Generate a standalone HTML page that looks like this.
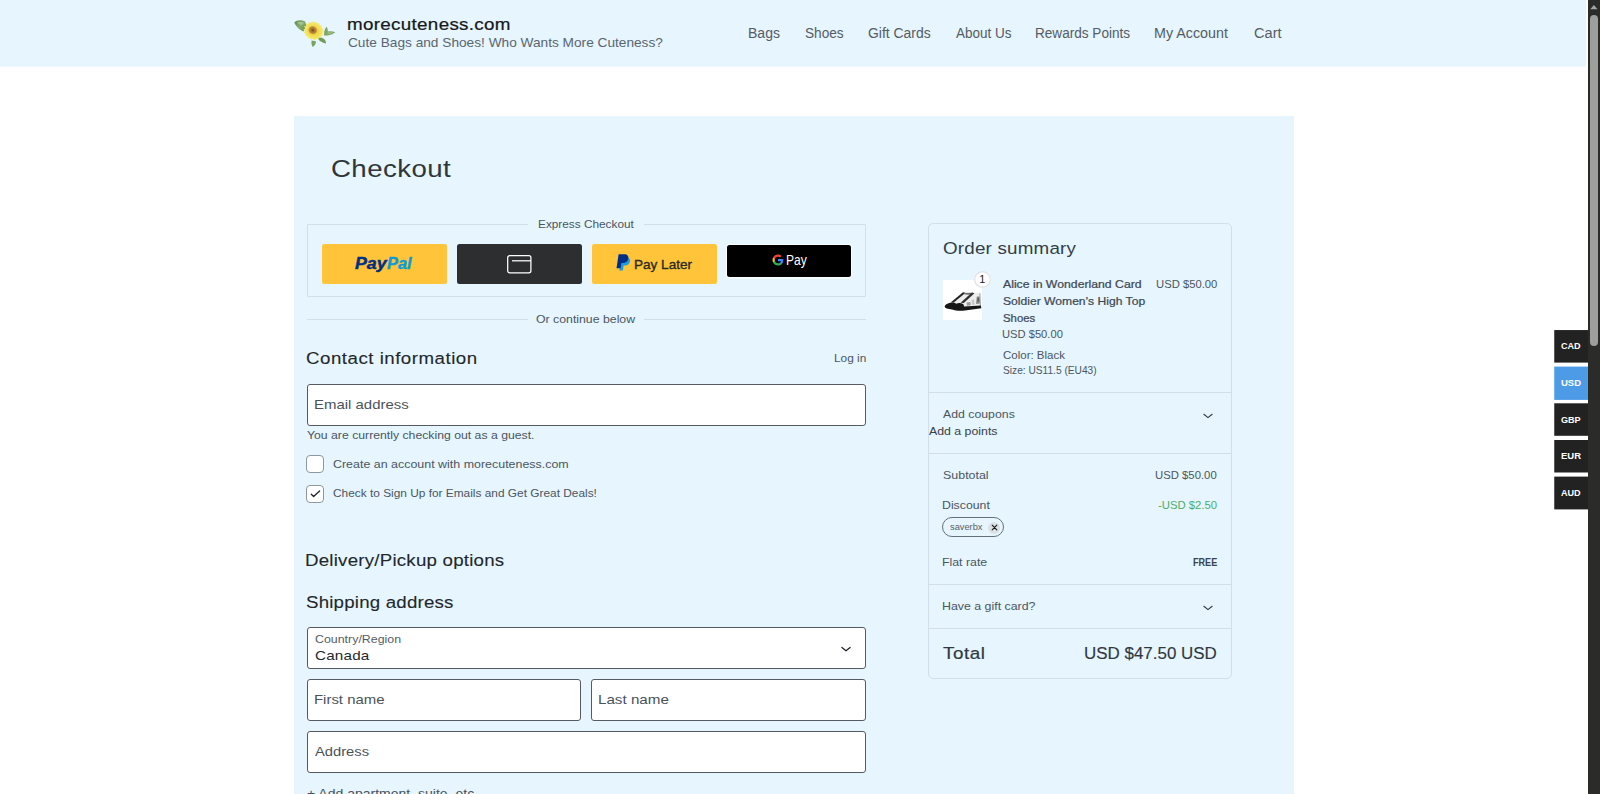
<!DOCTYPE html>
<html lang="en">
<head>
<meta charset="utf-8">
<title>Checkout – morecuteness.com</title>
<style>
*{box-sizing:border-box;margin:0;padding:0}
html,body{width:1600px;height:794px;overflow:hidden;background:#fff}
body{position:relative;font-family:"Liberation Sans",sans-serif;font-weight:400;color:#4b5661;font-size:11.2px}
.t{position:absolute;white-space:nowrap;line-height:1;transform-origin:0 0;font-weight:400;font-style:normal;text-decoration:none;display:block}
svg{position:absolute;overflow:visible}

#hdr{position:absolute;left:0;top:0;width:1586px;height:67px;background:linear-gradient(to bottom,#e6f5fe 0,#e6f5fe 66px,#f1f9fe 66px,#f1f9fe 67px)}
#main{position:absolute;left:294px;top:116px;width:1000px;height:678px;background:#e6f5fe;overflow:hidden}

.field{position:absolute;background:#fff;border:1px solid #555b61;border-radius:3px;height:42px}
.hr{position:absolute;height:1px;background:#d2dee8}
.cb{position:absolute;width:17.4px;height:17.4px;border:1px solid #8f989f;border-radius:4px;background:#fff}
#express{position:absolute;left:13px;top:108px;width:559px;height:73px;border:1px solid #d2dee8;border-radius:1px}
.pbtn{position:absolute;top:128px;width:125px;height:40px;border-radius:2.5px;display:block}
#summary{position:absolute;left:634.2px;top:107.2px;width:303.6px;height:455.6px;border:1px solid #d2dee8;border-radius:5px}
.sep{position:absolute;left:635px;width:302px;height:1px;background:#d2dee8}
#chip{position:absolute;left:648.3px;top:401px;width:61.4px;height:20px;border:1px solid #65707b;border-radius:10px}
#chip i{position:absolute;left:44.6px;top:3.5px;width:12px;height:12px;border-radius:6px;background:#dde1e5}
#qtyb{position:absolute;left:680.1px;top:155.3px;width:16.6px;height:16.6px;border-radius:8.3px;background:#fff;box-shadow:inset 0 0 0 1.4px #e1e5e8}
#thumb{position:absolute;left:648.6px;top:164.1px;width:39.6px;height:39.7px;background:#fff}

#sb{position:absolute;left:1588px;top:0;width:12px;height:794px;background:#2b2b2a}
#sb i{position:absolute;left:2.4px;top:15px;width:7.6px;height:331px;border-radius:4px;background:#9e9e9c}
</style>
</head>
<body>

<header id="hdr">
  <svg style="left:286px;top:10px" width="60" height="46" viewBox="0 0 60 46">
    <defs>
      <radialGradient id="gp" cx="50%" cy="50%" r="50%"><stop offset="0" stop-color="#e3bd34"/><stop offset=".5" stop-color="#f0d948"/><stop offset="1" stop-color="#f5e86e"/></radialGradient>
      <radialGradient id="gc" cx="50%" cy="50%" r="50%"><stop offset="0" stop-color="#6a4514"/><stop offset=".4" stop-color="#a5722a"/><stop offset="1" stop-color="#cfa043"/></radialGradient>
      <linearGradient id="gl" x1="0" y1="0" x2="1" y2="1"><stop offset="0" stop-color="#5f8a52"/><stop offset=".5" stop-color="#86ad6e"/><stop offset="1" stop-color="#5d8a4c"/></linearGradient>
    </defs>
    <path d="M8.3 12.6 C10.5 9.9 15.5 9.7 19.2 11.6 L20.6 16.5 L17.4 21.4 C13.2 20 9.8 16.4 8.3 12.6Z" fill="url(#gl)"/>
    <path d="M11 12.4 C13.4 11.2 16 11.6 18 12.8 L15.3 15.2 C13.6 14.6 12.2 13.6 11 12.4Z" fill="#b3cba0" opacity=".75"/>
    <path d="M38.2 21.5 C39 18.8 40 17.2 40.6 16.8 C41.6 18.4 42 20 41.8 21.6 C44.3 21 47 21.4 49.3 22.3 C47 24.3 44.3 25.3 41.6 25.4 L38 25.6Z" fill="#7fa867"/>
    <path d="M41.4 22.6 C43.6 22.2 45.6 22.2 47.4 22.5 C45.6 23.6 43.6 24.2 41.6 24.2Z" fill="#a8c594" opacity=".7"/>
    <path d="M32.4 27.2 C35.6 27 38.2 28.4 39.4 30.4 C39.9 31.6 40 32.8 40 33.6 C37 32.8 34.4 31.4 32.4 29.4Z" fill="#6f9c58"/>
    <path d="M25.6 30.6 C27.4 31 29.6 31.2 30 31.6 C30 33.8 28.6 36 26.6 37 C25.4 35 25.2 32.6 25.6 30.6Z" fill="#79a45f"/>
    <path d="M37.2 25.3 L34.5 25.5 L35.2 28.0 L32.6 27.3 L32.4 29.8 L30.0 28.3 L28.9 30.5 L27.2 28.5 L25.3 30.1 L24.4 27.7 L22.0 28.5 L22.0 26.0 L19.3 26.0 L20.3 23.8 L17.6 22.9 L19.4 21.2 L17.2 19.5 L19.5 18.5 L18.0 16.3 L20.7 16.1 L20.0 13.6 L22.6 14.3 L22.8 11.8 L25.2 13.3 L26.3 11.1 L28.0 13.1 L29.9 11.5 L30.8 13.9 L33.2 13.1 L33.2 15.6 L35.9 15.6 L34.9 17.8 L37.6 18.7 L35.8 20.4 L38.0 22.1 L35.7 23.1Z" fill="#f4e468"/>
    <ellipse cx="27.6" cy="20.8" rx="9.2" ry="8.3" transform="rotate(25 27.6 20.8)" fill="url(#gp)"/>
    <ellipse cx="26.8" cy="20.2" rx="4.4" ry="4" transform="rotate(25 26.8 20.2)" fill="url(#gc)"/>
  </svg>
  <a class="t" href="#" style="left:347.18px;top:17px;font-size:16.8px;letter-spacing:0.282px;color:#16181a;-webkit-text-stroke:.22px #16181a;transform:scaleX(1.1200)">morecuteness.com</a>
  <p class="t" style="left:347.93px;top:37px;font-size:12.7px;letter-spacing:0.000px;color:#5a6570;transform:scaleX(1.0777)">Cute Bags and Shoes! Who Wants More Cuteness?</p>
  <nav id="nav"><a class="t" href="#" style="left:748.47px;top:27px;font-size:13.8px;letter-spacing:0.000px;color:#555c63;transform:scaleX(1.0170)">Bags</a><a class="t" href="#" style="left:804.50px;top:27px;font-size:13.8px;letter-spacing:0.000px;color:#555c63;transform:scaleX(0.9889)">Shoes</a><a class="t" href="#" style="left:867.74px;top:27px;font-size:13.8px;letter-spacing:0.000px;color:#555c63;transform:scaleX(1.0102)">Gift Cards</a><a class="t" href="#" style="left:955.94px;top:27px;font-size:13.8px;letter-spacing:0.000px;color:#555c63;transform:scaleX(0.9776)">About Us</a><a class="t" href="#" style="left:1035.21px;top:27px;font-size:13.8px;letter-spacing:0.000px;color:#555c63;transform:scaleX(0.9841)">Rewards Points</a><a class="t" href="#" style="left:1154.45px;top:27px;font-size:13.8px;letter-spacing:0.000px;color:#555c63;transform:scaleX(1.0363)">My Account</a><a class="t" href="#" style="left:1253.61px;top:27px;font-size:13.8px;letter-spacing:0.000px;color:#555c63;transform:scaleX(1.0561)">Cart</a></nav>
</header>

<main id="main">
  <h1 class="t" style="left:36.60px;top:41px;font-size:24.7px;letter-spacing:0.361px;color:#30353a;font-weight:400;transform:scaleX(1.1200)">Checkout</h1>

  <fieldset id="express"></fieldset>
  <div style="position:absolute;left:234px;top:100px;width:116px;height:16px;background:#e6f5fe"></div>
  <span class="t" style="left:243.65px;top:103px;font-size:11.2px;letter-spacing:0.000px;color:#4b5661;transform:scaleX(1.0555)">Express Checkout</span>
  <a class="pbtn" href="#" style="left:28px;background:#ffc439"></a>
  <span class="t" style="left:60.78px;top:140px;font-size:16.9px;letter-spacing:0.000px;color:#002f86;font-weight:700;font-style:italic;-webkit-text-stroke:.45px #002f86;transform:scaleX(1.0524)">Pay</span><span class="t" style="left:93.49px;top:140px;font-size:16.9px;letter-spacing:0.000px;color:#0d9bd8;font-weight:700;font-style:italic;-webkit-text-stroke:.45px #0d9bd8;transform:scaleX(0.9687)">Pal</span>
  <a class="pbtn" href="#" style="left:163px;background:#2c2e2f">
    <svg style="left:50px;top:11px" width="26" height="20" viewBox="0 0 26 20" fill="none" stroke="#fff" stroke-width="1.25"><rect x=".7" y=".7" width="23.2" height="17.1" rx="2"/><path d="M5 5.8 H23.9"/></svg>
  </a>
  <a class="pbtn" href="#" style="left:298px;background:#ffc439">
    <svg style="left:24px;top:10px" width="15" height="17" viewBox="0 0 15 17">
      <path d="M5.2 3.2 H10.4 C13 3.2 14.4 4.9 14 7.2 C13.5 10 11.6 11.6 8.9 11.6 H7.6 L6.9 16.6 H3.3Z" fill="#1f9be0"/>
      <path d="M2.6 .3 H8.6 C11.3 .3 12.7 2 12.3 4.4 C11.8 7.3 9.8 8.9 7.1 8.9 H5.4 L4.6 14.3 H.5Z" fill="#012f87"/>
    </svg>
  </a>
  <span class="t" style="left:339.63px;top:142px;font-size:13.4px;letter-spacing:0.000px;color:#2b2a22;-webkit-text-stroke:.35px #2b2a22;transform:scaleX(1.0121)">Pay Later</span>
  <a class="pbtn" href="#" style="left:433px;top:129px;width:124.3px;height:32px;background:#000;box-shadow:0 0 0 1px rgba(255,255,255,.85),0 1.5px 1px rgba(255,255,255,.55)">
    <svg style="left:44.6px;top:9.1px" width="12" height="12" viewBox="0 0 48 48">
      <path fill="#4285f4" d="M45.1 24.5c0-1.6-.1-3.100-.4-4.500H24v8.500h11.800c-.5 2.800-2.100 5.100-4.400 6.700v5.500h7.100c4.200-3.800 6.600-9.500 6.600-16.200z"/>
      <path fill="#34a853" d="M24 46c6 0 11-2 14.600-5.300l-7.100-5.500c-2 1.300-4.500 2.100-7.500 2.100-5.700 0-10.600-3.900-12.300-9.100H4.300v5.700C7.900 41.100 15.400 46 24 46z"/>
      <path fill="#fbbc04" d="M11.700 28.200c-.4-1.300-.7-2.700-.7-4.200s.2-2.900.7-4.200v-5.700H4.300C2.800 17.100 2 20.500 2 24s.8 6.900 2.300 9.900l7.400-5.700z"/>
      <path fill="#ea4335" d="M24 10.700c3.200 0 6.100 1.100 8.400 3.300l6.300-6.300C34.900 4.200 30 2 24 2 15.400 2 7.900 6.900 4.300 14.100l7.400 5.700c1.700-5.200 6.600-9.100 12.300-9.100z"/>
    </svg>
  </a>
  <span class="t" style="left:492.13px;top:138px;font-size:13.8px;letter-spacing:0.000px;color:#fff;transform:scaleX(0.8749)">Pay</span>

  <div class="hr" style="left:13px;top:203px;width:221px"></div>
  <div class="hr" style="left:350px;top:203px;width:222px"></div>
  <span class="t" style="left:242.27px;top:198px;font-size:11.2px;letter-spacing:0.000px;color:#4b5661;transform:scaleX(1.0988)">Or continue below</span>

  <h2 class="t" style="left:12.06px;top:235px;font-size:16.7px;letter-spacing:0.449px;color:#23272b;font-weight:400;-webkit-text-stroke:.1px #23272b;transform:scaleX(1.1200)">Contact information</h2>
  <a class="t" href="#" style="left:539.62px;top:237px;font-size:11.2px;letter-spacing:0.000px;color:#4b5661;transform:scaleX(1.0594)">Log in</a>
  <label class="field" style="left:12.6px;top:268px;width:559.2px"></label>
  <span class="t" style="left:19.78px;top:282px;font-size:13.6px;letter-spacing:0.000px;color:#4a525a;transform:scaleX(1.0997)">Email address</span>
  <p class="t" style="left:12.67px;top:314px;font-size:11.2px;letter-spacing:0.000px;color:#4b5661;transform:scaleX(1.0940)">You are currently checking out as a guest.</p>
  <i class="cb" style="left:12.4px;top:339.4px"></i>
  <span class="t" style="left:38.65px;top:343px;font-size:11.2px;letter-spacing:0.000px;color:#4b5661;transform:scaleX(1.1117)">Create an account with morecuteness.com</span>
  <i class="cb" style="left:12.4px;top:369.4px"></i>
  <svg style="left:15px;top:372px" width="12" height="12" viewBox="0 0 12 12" fill="none" stroke="#1d2328" stroke-width="1.3" stroke-linecap="round" stroke-linejoin="round"><path d="M2.3 6.2 L4.6 8.55 L10.6 3"/></svg>
  <span class="t" style="left:38.67px;top:372px;font-size:11.2px;letter-spacing:0.000px;color:#4b5661;transform:scaleX(1.0610)">Check to Sign Up for Emails and Get Great Deals!</span>

  <h2 class="t" style="left:11.42px;top:437px;font-size:16.7px;letter-spacing:0.201px;color:#23272b;font-weight:400;-webkit-text-stroke:.1px #23272b;transform:scaleX(1.1200)">Delivery/Pickup options</h2>
  <h2 class="t" style="left:11.56px;top:479px;font-size:16.7px;letter-spacing:0.180px;color:#23272b;font-weight:400;-webkit-text-stroke:.1px #23272b;transform:scaleX(1.1200)">Shipping address</h2>

  <label class="field" style="left:12.6px;top:511px;width:559.2px"></label>
  <span class="t" style="left:20.55px;top:518px;font-size:11.2px;letter-spacing:0.000px;color:#555e67;transform:scaleX(1.1076)">Country/Region</span>
  <span class="t" style="left:20.60px;top:533px;font-size:13.6px;letter-spacing:0.171px;color:#23272b;transform:scaleX(1.1200)">Canada</span>
  <svg style="left:545.6px;top:529px" width="12" height="8" viewBox="0 0 12 8" fill="none" stroke="#1d2328" stroke-width="1.25" stroke-linecap="round" stroke-linejoin="round"><path d="M1.9 2.4 L6 5.8 L10.1 2.4"/></svg>
  <label class="field" style="left:12.6px;top:563px;width:274.5px"></label>
  <span class="t" style="left:19.79px;top:577px;font-size:13.6px;letter-spacing:0.000px;color:#4a525a;transform:scaleX(1.0980)">First name</span>
  <label class="field" style="left:297.1px;top:563px;width:274.7px"></label>
  <span class="t" style="left:304.27px;top:577px;font-size:13.6px;letter-spacing:0.000px;color:#4a525a;transform:scaleX(1.1158)">Last name</span>
  <label class="field" style="left:12.6px;top:615px;width:559.2px"></label>
  <span class="t" style="left:20.83px;top:629px;font-size:13.6px;letter-spacing:0.000px;color:#4a525a;transform:scaleX(1.0827)">Address</span>
  <span class="t" style="left:12.56px;top:671px;font-size:13.6px;letter-spacing:0.000px;color:#4a525a;transform:scaleX(1.0312)">+ Add apartment, suite, etc.</span>

  <aside id="summary"></aside>
  <h2 class="t" style="left:648.56px;top:125px;font-size:16.8px;letter-spacing:0.178px;color:#333d47;font-weight:400;transform:scaleX(1.1200)">Order summary</h2>
  <div id="thumb">
    <svg style="left:0;top:0" width="40" height="40" viewBox="0 0 40 40">
      <path d="M8.8 21.9 L20.6 12.2 L23 12.6 L29.6 12.2 L36.8 13.2 L37.3 25.8 L20.9 29 Z" fill="#ededed"/>
      <path d="M22.6 13 L29 12.8 L27 14.8 L21.4 14.6Z" fill="#6a6a6a"/>
      <path d="M33.8 16.6 L36.6 16.4 L36.9 23.6 L33 24Z" fill="#8f8f8f"/>
      <path d="M34.6 17.6 L36 17.6 L36.2 21.4 L34.2 21.6Z" fill="#5c5c5c"/>
      <path d="M23.6 22.6 L27.4 22 L27.8 25.2 L24 25.8Z" fill="#9a9a9a"/>
      <path d="M28.6 20 L31 19.4 L31.6 24.6 L29.2 25Z" fill="#c6c6c6"/>
      <path d="M24.5 16 L26.8 15.8 L25 19.4 L22.8 19.6Z" fill="#b5b5b5"/>
      <path d="M20 12.3 L22.6 12.8 L10.8 22.6 L7.6 22.4Z" fill="#262626"/>
      <path d="M29 12.6 L31.4 13.2 L20.8 23 L17.6 22.8Z" fill="#2e2e2e"/>
      <path d="M36.9 13.2 L37.4 25.8" stroke="#777" stroke-width=".7" fill="none"/>
      <path d="M1.7 26.6 C2 24.4 5.2 22.9 9 22.5 C11 22.3 12.4 23 13.2 23.8 C15 22.9 18 22.8 20 24 C20.8 24.6 21 25.6 21 26.6 L37.8 25.4 L38.4 28.2 L22 30.4 C17 31 12 30.4 9 29.4 C5 29.2 2 28.6 1.7 26.6Z" fill="#161616"/>
    </svg>
  </div>
  <span id="qtyb"></span>
  <span class="t" style="left:685.16px;top:158px;font-size:11.0px;letter-spacing:0.000px;color:#222">1</span>
  <span class="t" style="left:709.12px;top:163px;font-size:11.2px;letter-spacing:0.000px;color:#3f4953;-webkit-text-stroke:.24px #3f4953;transform:scaleX(1.0945)">Alice in Wonderland Card</span><span class="t" style="left:708.94px;top:180px;font-size:11.2px;letter-spacing:0.000px;color:#3f4953;-webkit-text-stroke:.24px #3f4953;transform:scaleX(1.0831)">Soldier Women’s High Top</span><span class="t" style="left:708.96px;top:197px;font-size:11.2px;letter-spacing:0.000px;color:#3f4953;-webkit-text-stroke:.24px #3f4953;transform:scaleX(1.0144)">Shoes</span>
  <span class="t" style="left:708.14px;top:213px;font-size:11.2px;letter-spacing:0.000px;color:#4b5661;transform:scaleX(0.9984)">USD $50.00</span>
  <span class="t" style="left:708.93px;top:234px;font-size:11.2px;letter-spacing:0.000px;color:#4b5661;transform:scaleX(1.0276)">Color: Black</span>
  <span class="t" style="left:708.91px;top:249px;font-size:11.2px;letter-spacing:0.000px;color:#4b5661;transform:scaleX(0.9090)">Size: US11.5 (EU43)</span>
  <span class="t" style="left:861.58px;top:163px;font-size:11.2px;letter-spacing:0.000px;color:#4b5661;transform:scaleX(1.0060)">USD $50.00</span>
  <div class="sep" style="top:276px"></div>
  <span class="t" style="left:648.92px;top:293px;font-size:11.2px;letter-spacing:0.000px;color:#4b5661;transform:scaleX(1.0990)">Add coupons</span>
  <svg style="left:907.5px;top:296px" width="12" height="8" viewBox="0 0 12 8" fill="none" stroke="#333d47" stroke-width="1.2" stroke-linecap="round" stroke-linejoin="round"><path d="M1.9 2.3 L6 5.6 L10.1 2.3"/></svg>
  <span class="t" style="left:635.42px;top:310px;font-size:11.2px;letter-spacing:0.000px;color:#3a4148;transform:scaleX(1.1013)">Add a points</span>
  <div class="sep" style="top:337px"></div>
  <span class="t" style="left:648.69px;top:354px;font-size:11.2px;letter-spacing:0.000px;color:#4b5661;transform:scaleX(1.1117)">Subtotal</span><span class="t" style="left:861.37px;top:354px;font-size:11.2px;letter-spacing:-0.000px;color:#4b5661;transform:scaleX(1.0127)">USD $50.00</span>
  <span class="t" style="left:647.93px;top:384px;font-size:11.2px;letter-spacing:0.000px;color:#4b5661;transform:scaleX(1.0993)">Discount</span><span class="t" style="left:864.39px;top:384px;font-size:11.2px;letter-spacing:0.000px;color:#4cae6b;transform:scaleX(1.0110)">-USD $2.50</span>
  <span id="chip"><i></i>
    <svg style="left:47.4px;top:6.3px" width="7" height="7" viewBox="0 0 7 7" fill="none" stroke="#16191c" stroke-width="1.15" stroke-linecap="round"><path d="M1.2 1.2 L5.8 5.8 M5.8 1.2 L1.2 5.8"/></svg>
  </span>
  <span class="t" style="left:656.45px;top:407px;font-size:9.0px;letter-spacing:0.000px;color:#56616b;transform:scaleX(1.0298)">saverbx</span>
  <span class="t" style="left:647.65px;top:441px;font-size:11.2px;letter-spacing:0.000px;color:#4b5661;transform:scaleX(1.1006)">Flat rate</span><strong class="t" style="left:898.69px;top:441px;font-size:10.6px;letter-spacing:0.000px;color:#3a444d;font-weight:700;transform:scaleX(0.8556)">FREE</strong>
  <div class="sep" style="top:468px"></div>
  <span class="t" style="left:647.65px;top:485px;font-size:11.2px;letter-spacing:0.000px;color:#4b5661;transform:scaleX(1.1044)">Have a gift card?</span>
  <svg style="left:907.5px;top:487.6px" width="12" height="8" viewBox="0 0 12 8" fill="none" stroke="#333d47" stroke-width="1.2" stroke-linecap="round" stroke-linejoin="round"><path d="M1.9 2.3 L6 5.6 L10.1 2.3"/></svg>
  <div class="sep" style="top:512px"></div>
  <span class="t" style="left:649.41px;top:530px;font-size:16.8px;letter-spacing:0.479px;color:#30383f;-webkit-text-stroke:.2px #30383f;transform:scaleX(1.1200)">Total</span><span class="t" style="left:790.43px;top:530px;font-size:16.8px;letter-spacing:0.000px;color:#30383f;-webkit-text-stroke:.15px #30383f;transform:scaleX(1.0096)">USD $47.50 USD</span>
</main>

<div id="cur">
  <svg style="left:1554px;top:329px" width="34" height="182" viewBox="0 0 34 182">
    <rect x=".25" y="1.05" width="34" height="32.55" fill="#222"/>
    <rect x=".25" y="37.6" width="34" height="33.3" fill="#4d9ae6"/>
    <rect x=".25" y="74.3" width="34" height="32.5" fill="#222"/>
    <rect x=".25" y="111" width="34" height="32.5" fill="#222"/>
    <rect x=".25" y="147.6" width="34" height="32.8" fill="#222"/>
  </svg>
  <a class="t" href="#" style="left:1560.75px;top:342px;font-size:9.0px;letter-spacing:0.000px;color:#fff;font-weight:700;transform:scaleX(1.0073)">CAD</a><a class="t" href="#" style="left:1560.70px;top:379px;font-size:9.0px;letter-spacing:0.000px;color:#fff;font-weight:700;transform:scaleX(1.0524)">USD</a><a class="t" href="#" style="left:1560.75px;top:416px;font-size:9.0px;letter-spacing:0.000px;color:#fff;font-weight:700;transform:scaleX(1.0065)">GBP</a><a class="t" href="#" style="left:1560.67px;top:452px;font-size:9.0px;letter-spacing:0.000px;color:#fff;font-weight:700;transform:scaleX(1.0539)">EUR</a><a class="t" href="#" style="left:1560.77px;top:489px;font-size:9.0px;letter-spacing:0.000px;color:#fff;font-weight:700;transform:scaleX(1.0061)">AUD</a>
</div>
<div id="sb"><svg style="left:2px;top:5px" width="8" height="4.2" viewBox="0 0 8 4.2"><path d="M.2 4.2 L3.9 0 L7.6 4.2Z" fill="#a3a3a1"/></svg><i></i></div>

</body>
</html>
